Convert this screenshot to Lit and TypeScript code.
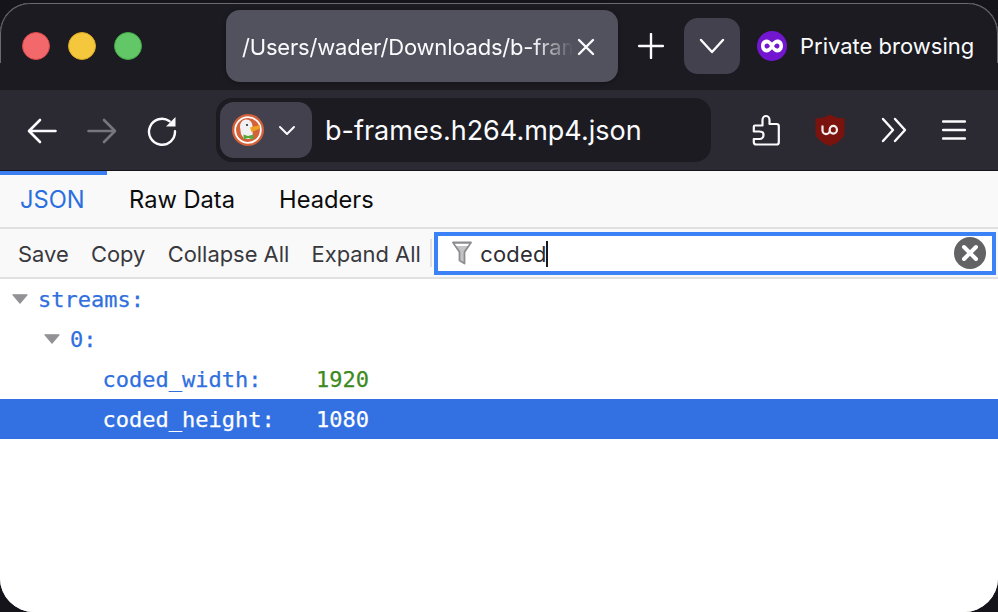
import { LitElement, html, css } from "lit";
import { customElement } from "lit/decorators.js";

@customElement("app-root")
export class AppRoot extends LitElement {
  static styles = css`
    :host { display: block; width: 998px; height: 612px; background: #15141a; overflow: hidden; font-family: Inter, "Liberation Sans", sans-serif; }
    .win { height: 609px; margin-top: 3px; border-radius: 30px 30px 34px 34px; overflow: hidden; display: flex; flex-direction: column; background: #fff; position: relative; }
    .edge { position: absolute; inset: 0; border-radius: 30px 30px 34px 34px; border: 1.5px solid #6a6a70; border-bottom: 0; pointer-events: none; -webkit-mask: linear-gradient(#000 60px, transparent 60px); mask: linear-gradient(#000 60px, transparent 60px); }
    .title { height: 87px; flex: none; background: #1c1b22; display: flex; align-items: flex-start; color: #fbfbfe; }
    .lights { display: flex; gap: 18px; padding: 29px 0 0 22px; width: 226px; box-sizing: border-box; flex: none; }
    .light { width: 28px; height: 28px; border-radius: 50%; box-sizing: border-box; }
    .red { background: #f2686b; border: 1px solid #d9484c; }
    .yellow { background: #f5c73d; border: 1px solid #d9a823; }
    .green { background: #62c766; border: 1px solid #43a948; }
    .tab { width: 392px; height: 72px; margin-top: 7px; border-radius: 14px; background: #52525e; display: flex; align-items: center; padding: 0 23px 0 16px; box-sizing: border-box; box-shadow: 0 1px 4px rgba(0,0,0,.35); flex: none; }
    .tab-text { flex: 1; min-width: 0; overflow: hidden; white-space: nowrap; font-size: 22px; letter-spacing: -.19px; -webkit-mask: linear-gradient(90deg, #000 88%, transparent 100%); mask: linear-gradient(90deg, #000 88%, transparent 100%); margin-right: 4px; padding-top: 2px; }
    .tab-x { flex: none; display: block; margin-top: 2px; }
    .plus { margin: 30px 20px 0 20px; flex: none; display: block; }
    .all { width: 56px; height: 56px; margin-top: 15px; border-radius: 14px; background: #42414d; display: flex; align-items: center; justify-content: center; flex: none; }
    .private { display: flex; align-items: center; gap: 13px; margin: 28px 0 0 17px; font-size: 22px; white-space: nowrap; }
    .nav { height: 80px; flex: none; background: #2b2a33; display: flex; align-items: center; color: #fbfbfe; }
    .navicons { width: 216px; flex: none; display: flex; align-items: center; padding-left: 27px; box-sizing: border-box; gap: 30px; }
    .navicons svg { margin-top: 2px; }
    .url { width: 495px; height: 64px; flex: none; background: #1c1b22; border-radius: 16px; display: flex; align-items: center; padding: 0 4px; box-sizing: border-box; }
    .identity { width: 92px; height: 56px; border-radius: 14px; background: #42414d; display: flex; align-items: center; padding-left: 12px; box-sizing: border-box; gap: 14px; flex: none; }
    .url-text { font-size: 27px; margin-left: 13px; white-space: nowrap; }
    .tools { flex: 1; display: flex; align-items: center; padding-left: 41px; }
    .hair { height: 1px; flex: none; background: #15141a; }
    .tabs { height: 56px; flex: none; background: #f9f9fa; display: flex; align-items: center; font-size: 23.7px; color: #0c0c0d; box-sizing: border-box; }
    .t { height: 100%; display: flex; align-items: center; box-sizing: border-box; }
    .t.first { width: 108px; padding-left: 20px; color: #2a6fe0; position: relative; }
    .t.first::before { content: ""; position: absolute; left: 0; top: 0; width: 107px; height: 4px; background: #3b7ef0; }
    .t.raw { padding-left: 21px; }
    .t.hdr { padding-left: 44px; }
    .rule { height: 2px; flex: none; background: #e0e0e2; }
    .bar { height: 48px; flex: none; background: #f9f9fa; display: flex; align-items: center; font-size: 21.9px; color: #38383d; padding-left: 18px; box-sizing: border-box; }
    .btn { margin-right: 22.3px; white-space: nowrap; padding-top: 2px; }
    .btn.last { margin-right: 9.5px; }
    .sep { width: 2px; height: 28px; background: #e0e0e2; flex: none; margin-right: 2px; }
    .filter { flex: 1; height: 43px; border: 4px solid #3b82f6; background: #fff; display: flex; align-items: center; box-sizing: border-box; padding: 0 0 0 14px; margin-right: 2px; color: #2e2e33; }
    .val { margin-left: 8px; letter-spacing: .2px; padding-top: 1px; }
    .caret { width: 2px; height: 26px; background: #1a1a1e; flex: none; margin-top: 1px; }
    .clear { margin-left: auto; margin-right: 6px; flex: none; display: block; }
    .tree { flex: 1; background: #fff; font-family: "DejaVu Sans Mono", "Liberation Mono", monospace; font-size: 22px; color: #2f6fde; -webkit-text-stroke: .25px currentColor; }
    .row { height: 40px; display: flex; align-items: center; white-space: nowrap; box-sizing: border-box; }
    .row.sel { background: #3371e3; color: #fff; }
    .tri { margin-right: 10px; flex: none; display: block; }
    .l0 { padding-left: 12px; }
    .l1 { padding-left: 44px; }
    .l2 { padding-left: 102.5px; }
    .key { width: 213.5px; flex: none; }
    .num { color: #3c8a1e; }
    .sel .num { color: #fff; }
    .ml-shield { margin-left: 35px; }
    .ml-more { margin-left: 36px; }
    .ml-menu { margin-left: 35px; }
  `;

  render() {
    const tri = html`<svg class="tri" width="16" height="10" viewBox="0 0 16 10"><path d="M1 .8H15L8 9.200Z" fill="#929296" stroke="#929296" stroke-width="1.200" stroke-linejoin="round"/></svg>`;
    return html`<div class="win">
      <div class="title">
        <div class="lights"><div class="light red"></div><div class="light yellow"></div><div class="light green"></div></div>
        <div class="tab">
          <div class="tab-text">/Users/wader/Downloads/b-frames.h264.mp4.json</div>
          <svg class="tab-x" width="18" height="18" viewBox="0 0 18 18"><path d="M2 2 16 16M16 2 2 16" stroke="#fbfbfe" stroke-width="2.4" stroke-linecap="round"/></svg>
        </div>
        <svg class="plus" width="26" height="26" viewBox="0 0 26 26"><path d="M13 1V25M1 13H25" stroke="#fbfbfe" stroke-width="2.4" stroke-linecap="round"/></svg>
        <div class="all"><svg width="26" height="16" viewBox="0 0 26 16"><path d="M2 2 13 14 24 2" fill="none" stroke="#fbfbfe" stroke-width="2.4" stroke-linecap="round" stroke-linejoin="round"/></svg></div>
        <div class="private">
          <svg width="30" height="30" viewBox="0 0 30 30"><circle cx="15" cy="15" r="15" fill="#7316d0"/><path fill-rule="evenodd" fill="#fff" d="M9.500 8.500c2.400 0 3.900 1.600 5.500 3 1.600-1.400 3.100-3 5.500-3 3 0 5.500 2.300 5.500 6.300s-2.500 6.700-5.500 6.700c-2.400 0-3.900-1.700-5.500-3.200-1.600 1.500-3.100 3.200-5.500 3.200-3 0-5.500-2.700-5.500-6.700s2.500-6.300 5.500-6.300ZM10 12.400c-1.400 0-2.500 1.100-2.500 2.500s1.100 2.600 2.500 2.600c1.300 0 2.200-1.400 3-2.600-.8-1.100-1.700-2.500-3-2.500ZM20 12.400c-1.300 0-2.200 1.400-3 2.500.8 1.200 1.700 2.600 3 2.600 1.400 0 2.500-1.200 2.500-2.600s-1.100-2.500-2.500-2.500Z"/></svg>
          <span>Private browsing</span>
        </div>
      </div>
      <div class="nav">
        <div class="navicons">
          <svg width="30" height="26" viewBox="0 0 30 26"><path d="M28.500 13H3M13 2 2 13 13 24" fill="none" stroke="#fbfbfe" stroke-width="2.600" stroke-linecap="round" stroke-linejoin="round"/></svg>
          <svg width="30" height="26" viewBox="0 0 30 26"><path d="M1.500 13H27M17 2 28 13 17 24" fill="none" stroke="#77767c" stroke-width="2.600" stroke-linecap="round" stroke-linejoin="round"/></svg>
          <svg width="30" height="30" viewBox="0 0 30 30"><path d="M22.600 5.200A13 13 0 1 0 28 15.200" fill="none" stroke="#fbfbfe" stroke-width="2.400" stroke-linecap="round"/><path d="M28.500 1V10.500H19Z" fill="#fbfbfe"/></svg>
        </div>
        <div class="url">
          <div class="identity">
            <svg width="32" height="32" viewBox="0 0 32 32"><circle cx="16" cy="16" r="16" fill="#d4613a"/><circle cx="16" cy="16" r="12.800" fill="#d4613a" stroke="#fff" stroke-width="1.800"/><path d="M8 13c0-5 3-7.500 6.500-7.500s6 3 6 7v5l.5 7.500h-9L9 20Z" fill="#f1f1f4"/><path d="M18 13.500 28 11 27 15 19.500 18Z" fill="#eda21f"/><circle cx="15" cy="11" r="1.100" fill="#2b2a33"/><path d="M11.500 25.500V20.500L16 22 21.500 20.500V25.500L16 24Z" fill="#58a83a"/></svg>
            <svg width="18" height="11" viewBox="0 0 18 11"><path d="M2 2 9 9 16 2" fill="none" stroke="#fbfbfe" stroke-width="2" stroke-linecap="round" stroke-linejoin="round"/></svg>
          </div>
          <div class="url-text">b-frames.h264.mp4.json</div>
        </div>
        <div class="tools">
          <svg width="28" height="32" viewBox="0 0 28 32"><path d="M3 11.500H10.500V6C10.500 3.500 12.500 2 14 2S17.500 3.500 17.500 6V10H24.500C25.800 10 26.800 11 26.800 12.200V28.200C26.800 29.400 25.800 30.500 24.500 30.500H4C2.800 30.500 1.800 29.500 1.800 28.300V25H7.500C10 25 11.500 23 11.500 21S10 17.500 7.500 17.500H1.800V12.700C1.800 12 2.300 11.500 3 11.500Z" fill="none" stroke="#fbfbfe" stroke-width="2.200" stroke-linejoin="round"/></svg>
          <svg class="ml-shield" width="30" height="32" viewBox="0 0 30 32"><path d="M15 .5 21 3.500 29.500 4.500V19C29.500 24 23 29 15 32 7 29 .5 24 .5 19V4.500L9 3.500Z" fill="#7a130e"/><path d="M7.500 11.500V16.500A3.600 3.600 0 0 0 14.700 16.500V15.500A3.600 3.600 0 0 1 21.900 15.500V16A3.600 3.600 0 0 1 14.700 16" fill="none" stroke="#f4eeee" stroke-width="2.200"/></svg>
          <svg class="ml-more" width="26" height="26" viewBox="0 0 26 26"><path d="M2 2 12 13 2 24M14 2 24 13 14 24" fill="none" stroke="#fbfbfe" stroke-width="2.400" stroke-linecap="round" stroke-linejoin="round"/></svg>
          <svg class="ml-menu" width="24" height="22" viewBox="0 0 24 22"><path d="M1 2.500H23M1 11H23M1 19.500H23" fill="none" stroke="#fbfbfe" stroke-width="2.400" stroke-linecap="round"/></svg>
        </div>
      </div>
      <div class="hair"></div>
      <div class="tabs">
        <div class="t first">JSON</div>
        <div class="t raw">Raw Data</div>
        <div class="t hdr">Headers</div>
      </div>
      <div class="rule"></div>
      <div class="bar">
        <span class="btn">Save</span><span class="btn">Copy</span><span class="btn">Collapse All</span><span class="btn last">Expand All</span>
        <div class="sep"></div>
        <div class="filter">
          <svg width="20" height="24" viewBox="0 0 20 24"><path d="M1 1.500H19L12.500 11V22.500L7.500 19.500V11Z" fill="#c4c4c6" stroke="#8d8d91" stroke-width="1.800" stroke-linejoin="round"/><path d="M3 3H17L15.500 5H4.500Z" fill="#fff"/></svg>
          <span class="val">coded</span><span class="caret"></span>
          <svg class="clear" width="32" height="32" viewBox="0 0 32 32"><circle cx="16" cy="16" r="16" fill="#636366"/><path d="M10 10 22 22M22 10 10 22" stroke="#fff" stroke-width="4" stroke-linecap="round"/></svg>
        </div>
      </div>
      <div class="rule"></div>
      <div class="tree">
        <div class="row l0">${tri}<span>streams:</span></div>
        <div class="row l1">${tri}<span>0:</span></div>
        <div class="row l2"><span class="key">coded_width:</span><span class="num">1920</span></div>
        <div class="row l2 sel"><span class="key">coded_height:</span><span class="num">1080</span></div>
      </div>
      <div class="edge"></div>
    </div>`;
  }
}
